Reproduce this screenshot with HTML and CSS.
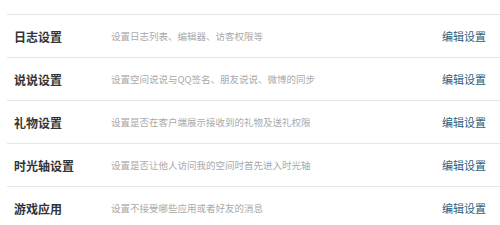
FILE: index.html
```html
<!DOCTYPE html>
<html lang="zh-CN">
<head>
  <meta charset="UTF-8">
  <title>权限设置</title>
  <link rel="stylesheet" href="styles.css">
</head>
<body>
  <!-- 设置列表 -->
  <ul class="setting-list">
    <li class="setting-item">
      <span class="setting-name">日志设置</span>
      <span class="setting-desc">设置日志列表、编辑器、访客权限等</span>
      <a class="setting-edit" href="#">编辑设置</a>
    </li>
    <li class="setting-item">
      <span class="setting-name">说说设置</span>
      <span class="setting-desc">设置空间说说与QQ签名、朋友说说、微博的同步</span>
      <a class="setting-edit" href="#">编辑设置</a>
    </li>
    <li class="setting-item">
      <span class="setting-name">礼物设置</span>
      <span class="setting-desc">设置是否在客户端展示接收到的礼物及送礼权限</span>
      <a class="setting-edit" href="#">编辑设置</a>
    </li>
    <li class="setting-item">
      <span class="setting-name">时光轴设置</span>
      <span class="setting-desc">设置是否让他人访问我的空间时首先进入时光轴</span>
      <a class="setting-edit" href="#">编辑设置</a>
    </li>
    <li class="setting-item">
      <span class="setting-name">游戏应用</span>
      <span class="setting-desc">设置不接受哪些应用或者好友的消息</span>
      <a class="setting-edit" href="#">编辑设置</a>
    </li>
  </ul>
</body>
</html>
```

FILE: styles.css
```css
body {
  margin: 0;
  background: #fff;
  font-family: "Noto Sans CJK SC", "Liberation Sans", sans-serif;
}
.setting-list {
  list-style: none;
  margin: 0;
  padding: 14px 0 0 7px;
}
/* 每一行：上边框分隔 */
.setting-item {
  display: flex;
  align-items: center;
  height: 42px;
  border-top: 1px solid #e6e6e6;
}
.setting-name {
  width: 97px;
  padding-left: 7px;
  font-size: 12px;
  font-weight: bold;
  color: #333;
}
.setting-desc {
  flex: 1;
  font-size: 9.5px;
  color: #aaa;
}
.setting-edit {
  margin-right: 14px;
  font-size: 11px;
  color: #2d5d7b;
  text-decoration: none;
}
```
